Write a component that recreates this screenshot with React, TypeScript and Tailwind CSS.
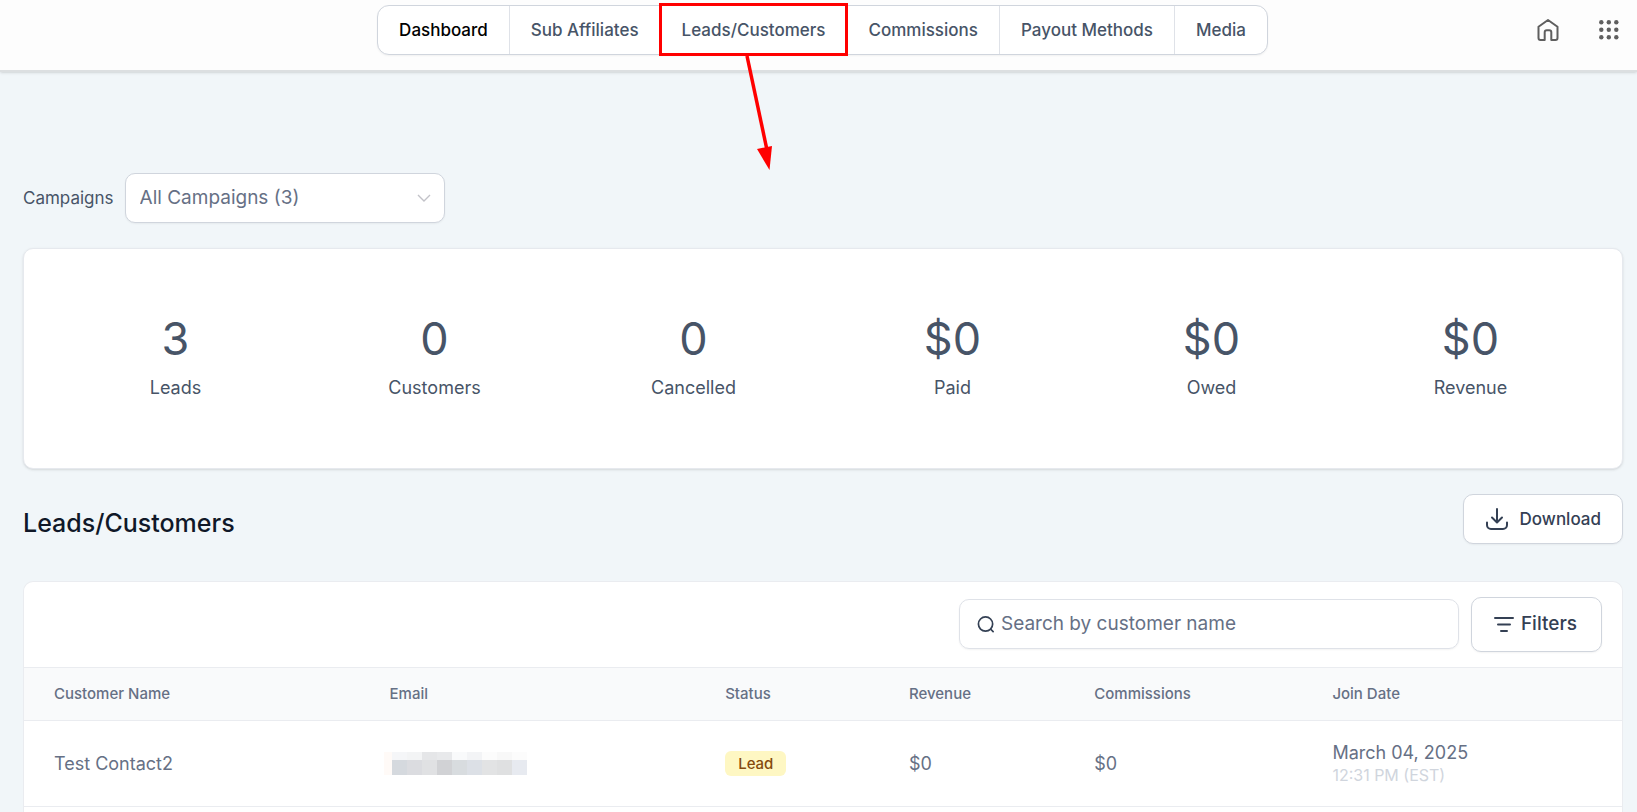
import { useState } from "react";

const navItems = [
  "Dashboard",
  "Sub Affiliates",
  "Leads/Customers",
  "Commissions",
  "Payout Methods",
  "Media",
];

const stats = [
  { label: "Leads", value: "3" },
  { label: "Customers", value: "0" },
  { label: "Cancelled", value: "0" },
  { label: "Paid", value: "$0" },
  { label: "Owed", value: "$0" },
  { label: "Revenue", value: "$0" },
];

const columns = [
  { label: "Customer Name", width: "w-[21%]" },
  { label: "Email", width: "w-[21%]" },
  { label: "Status", width: "w-[11.5%]" },
  { label: "Revenue", width: "w-[11.6%]" },
  { label: "Commissions", width: "w-[14.9%]" },
  { label: "Join Date", width: "w-[20%]" },
];

const maskTop = ["bg-[#f5f6f8]", "bg-[#f3f4f5]", "bg-[#e5e6e8]", "bg-[#e8e9eb]", "bg-[#f9fafb]", "bg-[#f3f4f6]", "bg-[#fcfcfc]", "bg-[#f8f8f8]", "bg-[#fcfcfc]"];
const maskBottom = ["bg-[#d5d9de]", "bg-[#dbdce0]", "bg-[#e0e1e3]", "bg-[#d1d2d5]", "bg-[#d8dcdf]", "bg-[#dce0e6]", "bg-[#e2e3e4]", "bg-[#dfe0e1]", "bg-[#e7eaf0]"];

function HomeIcon() {
  return (
    <svg width="22" height="24" viewBox="0 0 22 24" fill="none" stroke="#5f5f5f" strokeWidth="2" strokeLinejoin="round">
      <path d="M11 2 L20.5 8.8 V20 Q20.5 22 18.5 22 H14.3 V14.2 Q14.3 12.2 12.3 12.2 H9.700 Q7.700 12.2 7.700 14.2 V22 H3.5 Q1.5 22 1.5 20 V8.8 Z" />
    </svg>
  );
}

function AppsIcon() {
  return (
    <svg width="20" height="20" viewBox="0 0 20 20" fill="#5f5f5f">
      {[2.3, 9.8, 17.3].map((y) => [2.3, 9.8, 17.3].map((x) => <circle key={`${x}-${y}`} cx={x} cy={y} r="2.2" />))}
    </svg>
  );
}

function DownloadIcon() {
  return (
    <svg width="24" height="24" viewBox="0 0 24 24" fill="none" stroke="#344054" strokeWidth="2" strokeLinecap="round" strokeLinejoin="round">
      <path d="M12 2v13M7 10.5l5 5 5-5M2 15.500v2.500a4 4 0 0 0 4 4h12a4 4 0 0 0 4-4v-2.500" />
    </svg>
  );
}

function EmailMask() {
  return (
    <div className="-ml-[6px] flex" role="img" aria-label="Hidden email">
      <div className="w-2 bg-[#fffaf7]" />
      <div>
        <div className="flex">
          {maskTop.map((c, i) => (
            <div key={i} className={`h-2 w-[15px] ${c}`} />
          ))}
        </div>
        <div className="flex">
          {maskBottom.map((c, i) => (
            <div key={i} className={`h-[15px] w-[15px] ${c}`} />
          ))}
        </div>
      </div>
    </div>
  );
}

export default function App() {
  const [search, setSearch] = useState("");

  return (
    <div className="h-screen overflow-hidden bg-[#f1f6f9] font-['Inter',sans-serif] text-lg leading-6 text-[#475467]">
      <header className="grid grid-cols-[1fr_auto_1fr] items-start border-b-2 border-[#dcdfe1] bg-[#fdfdfd] pt-[5px] pr-[18px] pb-[15px] pl-[26px] shadow-sm">
        <nav className="col-start-2 flex rounded-xl border border-[#d0d5dd] bg-white text-[17px] font-medium text-[#475467] shadow-xs">
          {navItems.map((item, i) => (
            <div key={item} className="relative flex">
              <button
                type="button"
                className={`h-12 px-[21px] whitespace-nowrap ${i > 0 ? "border-l border-[#dfe2e8]" : "text-black"}`}
              >
                {item}
              </button>
              {item === "Leads/Customers" && (
                <>
                  <div className="pointer-events-none absolute -inset-x-px -top-[3px] -bottom-[2px] z-10 border-3 border-[#ff0000]" />
                  <svg className="pointer-events-none absolute top-[50px] left-[80px] z-10" width="36" height="116" viewBox="0 0 36 116">
                    <path d="M7 0 L27 94" stroke="#ff0000" strokeWidth="3.5" />
                    <path d="M17 93 L32 90 L29.500 114 Z" fill="#ff0000" />
                  </svg>
                </>
              )}
            </div>
          ))}
        </nav>
        <div className="flex h-[50px] items-center gap-10 justify-self-end">
          <button type="button" aria-label="Home"><HomeIcon /></button>
          <button type="button" aria-label="Apps"><AppsIcon /></button>
        </div>
      </header>

      <main className="pt-[101px] pr-[14px] pl-[23px]">
        <div className="flex items-center gap-[11px]">
          <label htmlFor="campaign" className="text-[17px]">Campaigns</label>
          <div className="relative w-80">
            <select
              id="campaign"
              className="h-[50px] w-full appearance-none rounded-[10px] border border-[#d0d5dd] bg-white px-[14px] text-[19px] text-[#667085] shadow-xs"
            >
              <option>All Campaigns (3)</option>
            </select>
            <svg className="pointer-events-none absolute top-[21px] right-[14px]" width="14" height="9" viewBox="0 0 14 9" fill="none" stroke="#c2c2c8" strokeWidth="1.4">
              <path d="M1 1l6 6 6-6" />
            </svg>
          </div>
        </div>

        <section className="mt-[25px] grid grid-cols-6 rounded-[10px] border border-[#e6e9ee] bg-white px-[22px] py-[60px] text-center shadow-sm">
          {stats.map((s) => (
            <div key={s.label}>
              <p className="text-[45px] leading-[60px]">{s.value}</p>
              <p className="mt-[7px] mb-2">{s.label}</p>
            </div>
          ))}
        </section>

        <div className="mt-[25px] flex items-start justify-between">
          <h1 className="mt-[13px] text-[25px] leading-8 font-medium text-[#101828]">Leads/Customers</h1>
          <button
            type="button"
            className="flex h-[50px] items-center gap-[11px] rounded-[10px] border border-[#d0d5dd] bg-white px-[21px] text-[17px] font-medium text-[#344054] shadow-xs"
          >
            <DownloadIcon />
            Download
          </button>
        </div>

        <section className="mt-[37px] rounded-t-[10px] border border-b-0 border-[#eaecf0] bg-white">
          <div className="flex items-start justify-end gap-3 py-[15px] pr-5">
            <label className="mt-[2px] flex h-[50px] w-[500px] items-center gap-[6px] rounded-[10px] border border-[#dfe2e8] px-[17px] shadow-xs">
              <svg width="19" height="19" viewBox="0 0 19 19" fill="none" stroke="#344054" strokeWidth="1.8" strokeLinecap="round">
                <circle cx="9" cy="9" r="7.500" />
                <path d="M14.500 14.500l2.500 2.500" />
              </svg>
              <input
                aria-label="Search by customer name"
                placeholder="Search by customer name"
                value={search}
                onChange={(e) => setSearch(e.target.value)}
                className="w-full text-[19px] outline-none placeholder:text-[#667085]"
              />
            </label>
            <button
              type="button"
              className="flex h-[55px] items-center gap-[6px] rounded-[10px] border border-[#d0d5dd] bg-white pr-6 pb-[2px] pl-[21px] text-[19px] font-medium text-[#344054] shadow-xs"
            >
              <svg width="22" height="18" viewBox="0 0 22 18" stroke="#344054" strokeWidth="2" strokeLinecap="round">
                <path d="M2 3h18M5 9.500h12M8 16h6" />
              </svg>
              Filters
            </button>
          </div>
          <table className="w-full table-fixed text-left text-[#667085]">
            <thead>
              <tr className="h-[53px] border-y border-[#eaecf0] bg-[#f9fafb] text-[15px]">
                {columns.map((c) => (
                  <th key={c.label} className={`pl-[30px] font-medium ${c.width}`}>
                    {c.label}
                  </th>
                ))}
              </tr>
            </thead>
            <tbody>
              <tr className="h-[86px] border-b border-[#eaecf0]">
                <td className="pl-[30px]">Test Contact2</td>
                <td className="pl-[30px]"><EmailMask /></td>
                <td className="pl-[30px]">
                  <span className="inline-block rounded-md bg-[#fef7c3] px-[13px] text-[15px] leading-[25px] font-medium text-[#854a0e]">
                    Lead
                  </span>
                </td>
                <td className="pl-[30px]">$0</td>
                <td className="pl-[30px]">$0</td>
                <td className="pl-[30px]">
                  <p className="leading-[22px]">March 04, 2025</p>
                  <p className="text-base leading-[22px] text-[#d0d5dd]">12:31 PM (EST)</p>
                </td>
              </tr>
              <tr className="h-[86px]" />
            </tbody>
          </table>
        </section>
      </main>
    </div>
  );
}
